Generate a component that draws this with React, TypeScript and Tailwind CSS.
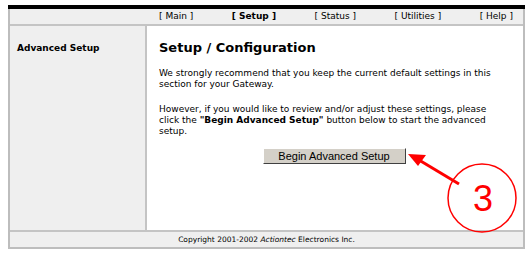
import React from 'react'

const navItems = ['Main', 'Setup', 'Status', 'Utilities', 'Help']

function Callout() {
  return (
    <svg className="absolute left-[404px] top-[150px]" width="125" height="87" viewBox="0 0 125 87">
      <line x1="10" y1="7" x2="55" y2="34" stroke="#ff0000" strokeWidth="3" />
      <polygon points="4,4 22,5 14,16" fill="#ff0000" />
      <circle cx="78" cy="48" r="34" fill="none" stroke="#ff0000" strokeWidth="1.5" />
      <text x="79" y="61" textAnchor="middle" fontFamily="Liberation Sans, Arial, sans-serif" fontSize="36" fill="#ff0000">
        3
      </text>
    </svg>
  )
}

function App() {
  return (
    <div className="relative h-[257px] w-[531px] bg-white pl-2 pt-[5px] font-['DejaVu_Sans',Verdana,sans-serif] text-[#000]">
      <div className="w-[517px]">
        <div className="h-[4px] bg-black" />
        <div className="border-x-2 border-b-2 border-[#bdbdbd]">
          <div className="flex h-[17px] items-center border-b-2 border-[#c4c4c4] bg-[#efefef] text-[9px]">
            <div className="w-[139px]" />
            <div className="flex flex-1 justify-between pr-[10px] pl-[10px]">
              {navItems.map((item) => (
                <span key={item} className={item === 'Setup' ? 'font-bold' : ''}>
                  [ {item} ]
                </span>
              ))}
            </div>
          </div>
          <div className="flex h-[204px]">
            <div className="w-[137px] border-r-2 border-[#c4c4c4] bg-[#efefef] pt-[16px] pl-[7px] text-[9px] font-bold">
              Advanced Setup
            </div>
            <div className="flex-1 pt-[14px] pl-[12px] pr-[28px] text-[9px] leading-[11px]">
              <h1 className="text-[13px] font-bold leading-[16px]">Setup / Configuration</h1>
              <p className="mt-[12px]">
                We strongly recommend that you keep the current default settings in this section for your Gateway.
              </p>
              <p className="mt-[14px]">
                However, if you would like to review and/or adjust these settings, please click the{' '}
                <b>"Begin Advanced Setup"</b> button below to start the advanced setup.
              </p>
              <div className="mt-[11px] flex justify-center pl-[14px]">
                <button className="h-[16px] w-[143px] border border-t-white border-l-white border-r-[#404040] border-b-[#404040] bg-[#d4d0c8] font-['Liberation_Sans',Arial,sans-serif] text-[11px] leading-[14px]">
                  Begin Advanced Setup
                </button>
              </div>
            </div>
          </div>
          <div className="flex h-[17px] items-center justify-center border-t-2 border-[#c4c4c4] bg-[#efefef] text-[7.5px]">
            <span>
              Copyright 2001-2002 <i>Actiontec</i> Electronics Inc.
            </span>
          </div>
        </div>
      </div>
      <Callout />
    </div>
  )
}

export default App
